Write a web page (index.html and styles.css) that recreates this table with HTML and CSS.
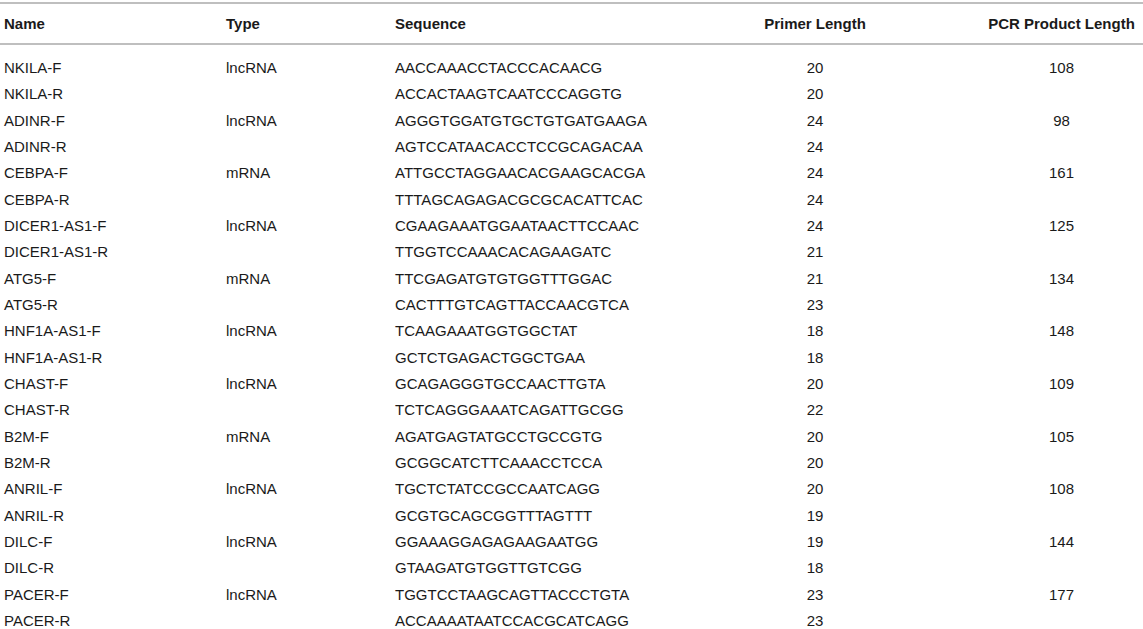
FILE: index.html
```html
<!DOCTYPE html>
<html>
<head>
<meta charset="utf-8">
<link rel="stylesheet" href="styles.css">
</head>
<body>
<table class="primers">
  <colgroup>
    <col class="c-name"><col class="c-type"><col class="c-seq"><col class="c-len"><col class="c-prod">
  </colgroup>
  <thead>
    <tr>
      <th class="left">Name</th>
      <th class="left">Type</th>
      <th class="left">Sequence</th>
      <th class="center">Primer Length</th>
      <th class="center prod">PCR Product Length</th>
    </tr>
  </thead>
  <tbody>
    <tr class="first"><td>NKILA-F</td><td>lncRNA</td><td>AACCAAACCTACCCACAACG</td><td class="center">20</td><td class="center prod">108</td></tr>
    <tr><td>NKILA-R</td><td></td><td>ACCACTAAGTCAATCCCAGGTG</td><td class="center">20</td><td class="center prod"></td></tr>
    <tr><td>ADINR-F</td><td>lncRNA</td><td>AGGGTGGATGTGCTGTGATGAAGA</td><td class="center">24</td><td class="center prod">98</td></tr>
    <tr><td>ADINR-R</td><td></td><td>AGTCCATAACACCTCCGCAGACAA</td><td class="center">24</td><td class="center prod"></td></tr>
    <tr><td>CEBPA-F</td><td>mRNA</td><td>ATTGCCTAGGAACACGAAGCACGA</td><td class="center">24</td><td class="center prod">161</td></tr>
    <tr><td>CEBPA-R</td><td></td><td>TTTAGCAGAGACGCGCACATTCAC</td><td class="center">24</td><td class="center prod"></td></tr>
    <tr><td>DICER1-AS1-F</td><td>lncRNA</td><td>CGAAGAAATGGAATAACTTCCAAC</td><td class="center">24</td><td class="center prod">125</td></tr>
    <tr><td>DICER1-AS1-R</td><td></td><td>TTGGTCCAAACACAGAAGATC</td><td class="center">21</td><td class="center prod"></td></tr>
    <tr><td>ATG5-F</td><td>mRNA</td><td>TTCGAGATGTGTGGTTTGGAC</td><td class="center">21</td><td class="center prod">134</td></tr>
    <tr><td>ATG5-R</td><td></td><td>CACTTTGTCAGTTACCAACGTCA</td><td class="center">23</td><td class="center prod"></td></tr>
    <tr><td>HNF1A-AS1-F</td><td>lncRNA</td><td>TCAAGAAATGGTGGCTAT</td><td class="center">18</td><td class="center prod">148</td></tr>
    <tr><td>HNF1A-AS1-R</td><td></td><td>GCTCTGAGACTGGCTGAA</td><td class="center">18</td><td class="center prod"></td></tr>
    <tr><td>CHAST-F</td><td>lncRNA</td><td>GCAGAGGGTGCCAACTTGTA</td><td class="center">20</td><td class="center prod">109</td></tr>
    <tr><td>CHAST-R</td><td></td><td>TCTCAGGGAAATCAGATTGCGG</td><td class="center">22</td><td class="center prod"></td></tr>
    <tr><td>B2M-F</td><td>mRNA</td><td>AGATGAGTATGCCTGCCGTG</td><td class="center">20</td><td class="center prod">105</td></tr>
    <tr><td>B2M-R</td><td></td><td>GCGGCATCTTCAAACCTCCA</td><td class="center">20</td><td class="center prod"></td></tr>
    <tr><td>ANRIL-F</td><td>lncRNA</td><td>TGCTCTATCCGCCAATCAGG</td><td class="center">20</td><td class="center prod">108</td></tr>
    <tr><td>ANRIL-R</td><td></td><td>GCGTGCAGCGGTTTAGTTT</td><td class="center">19</td><td class="center prod"></td></tr>
    <tr><td>DILC-F</td><td>lncRNA</td><td>GGAAAGGAGAGAAGAATGG</td><td class="center">19</td><td class="center prod">144</td></tr>
    <tr><td>DILC-R</td><td></td><td>GTAAGATGTGGTTGTCGG</td><td class="center">18</td><td class="center prod"></td></tr>
    <tr><td>PACER-F</td><td>lncRNA</td><td>TGGTCCTAAGCAGTTACCCTGTA</td><td class="center">23</td><td class="center prod">177</td></tr>
    <tr><td>PACER-R</td><td></td><td>ACCAAAATAATCCACGCATCAGG</td><td class="center">23</td><td class="center prod"></td></tr>
  </tbody>
</table>
</body>
</html>
```

FILE: styles.css
```css
html, body {
  margin: 0;
  padding: 0;
  background: #ffffff;
}
body {
  font-family: "Liberation Sans", Arial, Helvetica, sans-serif;
  font-size: 15px;
  color: #1a1a1a;
  padding-top: 2px;
}
.primers {
  width: 1143px;
  border-collapse: collapse;
  table-layout: fixed;
}
.c-name { width: 222px; }
.c-type { width: 169px; }
.c-seq { width: 309px; }
.c-len { width: 230px; }
.c-prod { width: 213px; }

.primers thead tr {
  border-top: 2px solid #bfbfbf;
  border-bottom: 2px solid #bfbfbf;
}
.primers th {
  font-weight: bold;
  height: 39px;
  padding: 0 0 0 4px;
  line-height: 18px;
  vertical-align: middle;
  white-space: nowrap;
}
.primers td {
  padding: 0 0 0 4px;
  height: 26.33px;
  line-height: 26.33px;
  white-space: nowrap;
}
.primers tr.first td {
  padding-top: 10px;
}
.left { text-align: left; }
.center { text-align: center; }
.primers .center { padding-left: 0; }
.primers .prod { padding-left: 50px; padding-right: 0; }
```
